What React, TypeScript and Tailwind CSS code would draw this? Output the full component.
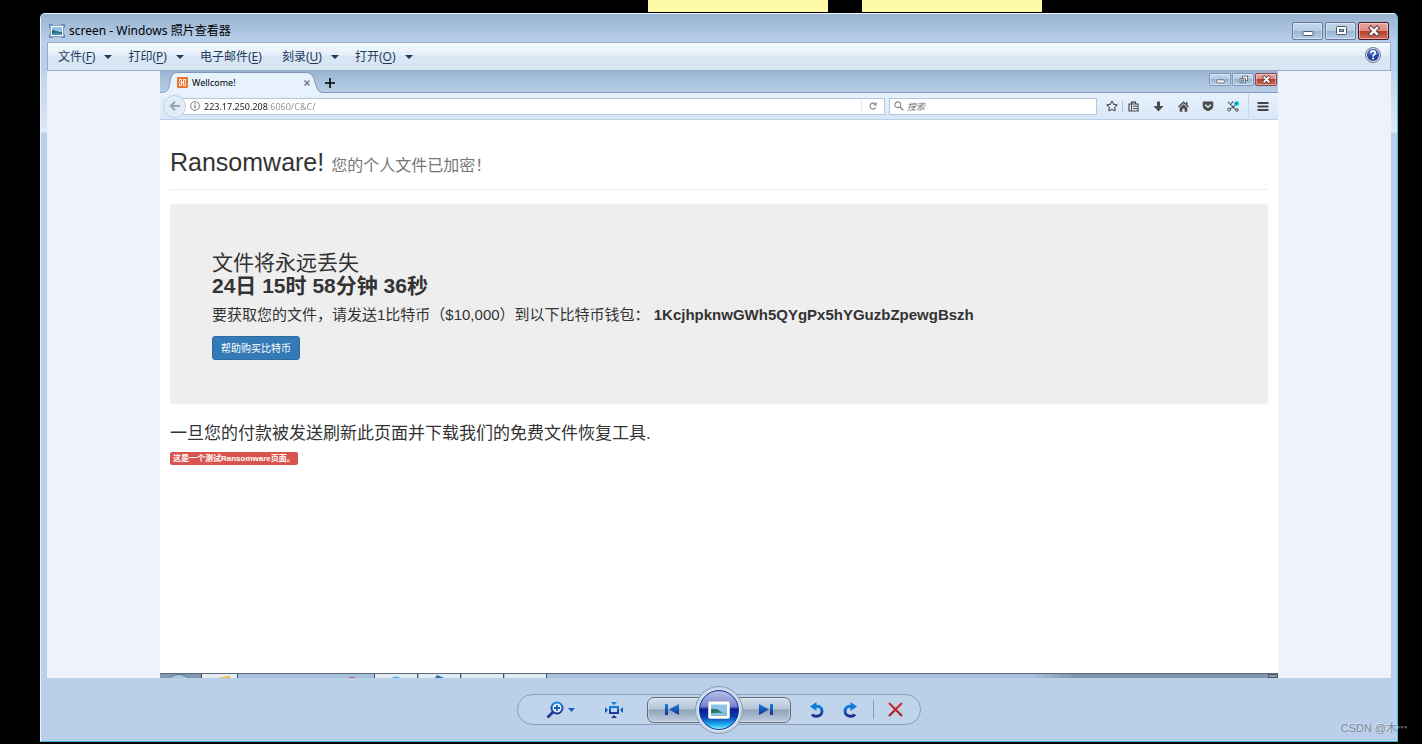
import React from "react";
import { FaGetPocket, FaRegStar } from "react-icons/fa";

const menuItems = [
  { label: "文件", hotkey: "F", arrow: true },
  { label: "打印", hotkey: "P", arrow: true },
  { label: "电子邮件", hotkey: "E", arrow: false },
  { label: "刻录", hotkey: "U", arrow: true },
  { label: "打开", hotkey: "O", arrow: true },
];

function PhotoIcon({ className }: { className?: string }) {
  return (
    <svg viewBox="0 0 16 14" className={className} aria-hidden="true">
      <path d="M.5 3.5v-3h3M12.500.5h3v3M15.500 10.500v3h-3M3.500 13.500h-3v-3" fill="none" stroke="#3f87bd" />
      <rect x="1.500" y="1.500" width="13" height="11" rx="1" fill="#fff" stroke="#6f8090" strokeWidth=".7" />
      <rect x="3" y="3" width="10" height="8" fill="#8fc3ea" />
      <path d="M3 6c3 0 5 2 10 2v3H3z" fill="#2c6b68" />
      <path d="M3 9.500c4-1 6-1 10 .3V11H3z" fill="#3b8fc4" />
    </svg>
  );
}

function CaptionIcon({ kind, small }: { kind: string; small?: boolean }) {
  return (
    <svg viewBox="0 0 14 12" className={small ? "h-[9px] w-[11px]" : "h-3 w-[14px]"} aria-hidden="true">
      {kind === "min" && <rect x="2" y="6.500" width="10" height="4" rx=".8" fill="#fff" stroke="#515a68" />}
      {kind === "max" && (
        <g stroke="#515a68">
          <rect x="2.500" y="1.500" width="10" height="8" rx=".8" fill="#fff" />
          <rect x="5.500" y="4.500" width="4" height="2" fill="#9cb6d2" />
        </g>
      )}
      {kind === "restore" && (
        <g stroke="#515a68">
          <rect x="5.500" y="1.500" width="7" height="6" fill="#fff" />
          <rect x="2.500" y="4.500" width="7" height="6" fill="#fff" />
          <rect x="4.500" y="6.500" width="3" height="2" fill="#9cb6d2" />
        </g>
      )}
      {kind === "close" && (
        <g strokeLinecap="square">
          <path d="M4 3l6 6M10 3L4 9" stroke="#5b3a41" strokeWidth="4.400" />
          <path d="M4 3l6 6M10 3L4 9" stroke="#fff" strokeWidth="2.400" />
        </g>
      )}
    </svg>
  );
}

function CaptionButton({ kind, label, small }: { kind: string; label: string; small?: boolean }) {
  const size = small ? "h-[13px] w-[22px]" : "h-[18px] w-[31px]";
  const border = kind === "close" ? (small ? "border-[#83495a]" : "border-[#4c1723]") : small ? "border-[#8196b5]" : "border-[#66799a]";
  const fill =
    kind === "close"
      ? "bg-[linear-gradient(#e5a69d_0%,#dc8d82_48%,#bb3a25_50%,#d0705c_100%)]"
      : "bg-[linear-gradient(#c3d6ea_0%,#b4cbe3_48%,#97b2cf_50%,#b7cfe8_100%)]";
  return (
    <button
      aria-label={label}
      className={`${size} ${border} ${fill} flex items-center justify-center rounded-[2px] border shadow-[inset_0_0_0_1px_rgba(255,255,255,0.4)]`}
    >
      <CaptionIcon kind={kind} small={small} />
    </button>
  );
}

function TitleBar() {
  return (
    <header className="flex h-7 items-start justify-between pl-[2px] pr-[2px] pt-2">
      <div className="flex h-[18px] items-center gap-1">
        <PhotoIcon className="h-[14px] w-4" />
        <h1 className="text-xs text-black">screen - Windows 照片查看器</h1>
      </div>
      <div className="flex gap-[2px]">
        <CaptionButton kind="min" label="最小化" />
        <CaptionButton kind="max" label="最大化" />
        <CaptionButton kind="close" label="关闭" />
      </div>
    </header>
  );
}

function MenuBar() {
  return (
    <nav className="flex h-[29px] items-center justify-between border border-[#9aabc8] bg-[linear-gradient(#f6fafe_0%,#e3eef8_45%,#d8e5f3_50%,#d9e6f4_100%)] pl-[10px] pr-[9px]">
      <div className="flex items-center text-xs text-[#1e395b]">
        {menuItems.map((item) => (
          <button key={item.hotkey} className={item.arrow ? "mr-4 flex items-center gap-[9px]" : "mr-5"}>
            <span>
              {item.label}(<u className="underline-offset-2">{item.hotkey}</u>)
            </span>
            {item.arrow && (
              <svg viewBox="0 0 8 4" className="h-1 w-2" aria-hidden="true">
                <path d="M0 0h8L4 4z" fill="#1e395b" />
              </svg>
            )}
          </button>
        ))}
      </div>
      <button aria-label="帮助" className="mb-[3px]">
        <svg viewBox="0 0 16 16" className="size-4" aria-hidden="true">
          <circle cx="8" cy="8" r="7.500" fill="#e6e9ee" stroke="#75797f" />
          <circle cx="8" cy="8" r="6" fill="#2446a8" />
          <path d="M2.500 7a5.500 5 0 0 1 11 0c-3 2-8 2-11 0z" fill="#4668c4" />
          <path d="M5.800 6.200C5.800 3.200 10.300 3.300 10.300 6c0 1.700-2.200 1.700-2.200 3.500" fill="none" stroke="#fff" strokeWidth="1.700" />
          <rect x="7.200" y="10.500" width="1.800" height="1.800" fill="#fff" />
        </svg>
      </button>
    </nav>
  );
}

function TabStrip() {
  return (
    <div className="flex h-[22px] items-start justify-between border-b border-[#8299bd] bg-[linear-gradient(#9ab4d2,#b7cfe8)] pr-px">
      <div className="flex h-[22px] items-end">
        <div className="relative flex h-[22px] w-[164px] items-center pl-[17px] pr-2 pt-px">
          <svg viewBox="0 0 164 22" className="absolute inset-0 h-full w-full" aria-hidden="true">
            <path
              d="M0 21.500C8 21.500 9 18 10 11C11 3 14 1.500 19 1.500H145C151 1.500 153 4 155 11C157 18 158 21.500 164 21.500V22H0z"
              fill="#e7f2fd"
            />
            <path
              d="M0 21.500C8 21.500 9 18 10 11C11 3 14 1.500 19 1.500H145C151 1.500 153 4 155 11C157 18 158 21.500 164 21.500"
              fill="none"
              stroke="#7f96ba"
            />
          </svg>
          <svg viewBox="0 0 11 11" className="relative size-[11px]" aria-hidden="true">
            <rect width="11" height="11" rx="1" fill="#ea7430" />
            <path d="M4.500 2.500h-2v2l.7 1-.7 1v2h2v-3h2v3h2v-2l-.7-1 .7-1v-2h-2v3h-2z" fill="none" stroke="#fff" strokeWidth=".9" strokeLinejoin="round" />
          </svg>
          <span className="relative ml-1 flex-1 text-[9px] text-black">Wellcome!</span>
          <button aria-label="关闭标签页" className="relative mr-[6px]">
            <svg viewBox="0 0 6 6" className="size-[6px]" aria-hidden="true">
              <path d="M.5.5l5 5M5.500.5l-5 5" stroke="#747e8b" strokeWidth="1.500" />
            </svg>
          </button>
        </div>
        <button aria-label="新建标签页" className="flex h-[22px] w-3 items-center justify-center pt-[2px]">
          <svg viewBox="0 0 10 10" className="size-[10px]" aria-hidden="true">
            <path d="M5 0v10M0 5h10" stroke="#000" strokeWidth="1.600" />
          </svg>
        </button>
      </div>
      <div className="flex gap-px pt-[2px]">
        <CaptionButton small kind="min" label="最小化窗口" />
        <CaptionButton small kind="restore" label="还原窗口" />
        <CaptionButton small kind="close" label="关闭窗口" />
      </div>
    </div>
  );
}

function NavBar() {
  return (
    <div className="flex h-[27px] items-center border-b border-[#bdd0e6] bg-[linear-gradient(#e7f2fd,#d8e7f7)] pl-[3px] pr-[9px] text-[#4a4a4a]">
      <button
        aria-label="后退"
        className="z-10 -mr-1 flex size-[23px] shrink-0 items-center justify-center rounded-full border border-[#c0cfdf] bg-[#e2edf8]"
      >
        <svg viewBox="0 0 12 10" className="h-[10px] w-3" aria-hidden="true">
          <path d="M6 .8L1.800 5L6 9.200M2 5h9" fill="none" stroke="#9ba5af" strokeWidth="2.200" />
        </svg>
      </button>
      <div className="flex h-[17px] flex-1 items-center border border-[#b4c7de] bg-white pl-[7px]">
        <svg viewBox="0 0 10 10" className="size-[10px] shrink-0" aria-hidden="true">
          <circle cx="5" cy="5" r="4.400" fill="none" stroke="#717171" strokeWidth=".9" />
          <path d="M5 4.300v3.200M5 2.300v1.200" stroke="#717171" strokeWidth="1.200" />
        </svg>
        <input
          aria-label="地址"
          defaultValue="223.17.250.208:6060/C&C/"
          className="ml-1 h-[15px] min-w-0 flex-1 bg-[linear-gradient(90deg,#1c1c1c_64px,#8f8f8f_64px)] bg-clip-text text-[9px] text-transparent outline-none"
        />
        <button aria-label="刷新" className="flex h-[13px] w-[23px] items-center justify-center border-l border-[#e2e8ef]">
          <svg viewBox="0 0 8 8" className="size-2" aria-hidden="true">
            <path d="M6.700 5.500A3 3 0 1 1 6.200 2" fill="none" stroke="#7d8b99" strokeWidth="1.200" />
            <path d="M7.600 0v3.600H4z" fill="#7d8b99" />
          </svg>
        </button>
      </div>
      <div className="ml-1 flex h-[17px] w-[208px] items-center border border-[#b4c7de] bg-white pl-1">
        <svg viewBox="0 0 10 10" className="size-[10px]" aria-hidden="true">
          <circle cx="3.800" cy="3.800" r="2.900" fill="none" stroke="#8a8a8a" strokeWidth="1.200" />
          <path d="M6 6l3.300 3.300" stroke="#8a8a8a" strokeWidth="1.500" />
        </svg>
        <input
          aria-label="搜索"
          placeholder="搜索"
          className="ml-[3px] h-[15px] min-w-0 flex-1 text-[9px] italic outline-none placeholder:text-[#707070]"
        />
      </div>
      <div className="ml-[9px] flex items-center">
        <button aria-label="收藏">
          <FaRegStar className="size-3" />
        </button>
        <span className="ml-1 h-3 w-px bg-[#b9c6d6]" />
        <button aria-label="书签" className="ml-[5px]">
          <svg viewBox="0 0 11 11" className="size-[11px]" aria-hidden="true">
            <path d="M1 3h9v7H1zM3.500 3V1.200h4V3" fill="none" stroke="#4a4a4a" strokeWidth="1.200" />
            <path d="M3.500 3v7M5 5.200h4M5 7.500h4" stroke="#4a4a4a" />
          </svg>
        </button>
        <button aria-label="下载" className="ml-[14px]">
          <svg viewBox="0 0 11 11" className="size-[11px]" aria-hidden="true">
            <path d="M4 .5h3V5h3.500l-5 5.500L.5 5H4z" fill="#4a4a4a" />
          </svg>
        </button>
        <button aria-label="主页" className="ml-[14px]">
          <svg viewBox="0 0 11 11" className="size-[11px]" aria-hidden="true">
            <path d="M5.500.3L11 5.600l-.9.900-4.600-4.300L.9 6.500 0 5.600z" fill="#4a4a4a" />
            <path d="M5.500 3.200L9.300 6.700v4H6.600V7.500H4.400v3.200H1.700v-4z" fill="#4a4a4a" />
            <path d="M8 1h1.500v3L8 2.600z" fill="#4a4a4a" />
          </svg>
        </button>
        <button aria-label="Pocket" className="ml-[13px]">
          <FaGetPocket className="size-3" />
        </button>
        <button aria-label="截图" className="ml-[13px]">
          <svg viewBox="0 0 13 11" className="h-[11px] w-[13px]" aria-hidden="true">
            <path d="M1 1l8 8M10 3L3 8.500M6 .5L4 3" stroke="#555" strokeWidth="1.300" strokeDasharray="2 .5" />
            <circle cx="2" cy="8.500" r="1.500" fill="none" stroke="#555" />
            <circle cx="10" cy="9" r="1.300" fill="none" stroke="#555" />
            <circle cx="9.500" cy="2.500" r="2.500" fill="#12d8e4" />
            <circle cx="9.500" cy="2.500" r="1" fill="#134e58" />
          </svg>
        </button>
        <span className="ml-2 h-6 w-px bg-[#c6d6e7]" />
        <button aria-label="菜单" className="ml-2">
          <svg viewBox="0 0 12 9" className="h-[9px] w-3" aria-hidden="true">
            <path d="M.5 1h11M.5 4.500h11M.5 8h11" stroke="#454545" strokeWidth="2" />
          </svg>
        </button>
      </div>
    </div>
  );
}

function PageContent() {
  return (
    <main className="flex-1 bg-white px-[10px] pt-[26px] font-['Liberation_Sans','Noto_Sans_CJK_SC',sans-serif] text-[#333]">
      <h2 className="border-b border-[#eee] pb-[10px] text-[25px] leading-[33px]">
        Ransomware! <small className="text-base leading-none text-[#777]">您的个人文件已加密！</small>
      </h2>
      <section className="mt-[14px] rounded-[4px] bg-[#eee] px-[42px] pb-11 pt-[47px]">
        <h3 className="text-[21px] leading-[23px]">文件将永远丢失</h3>
        <p className="text-[21px] font-bold leading-[23px]">24日 15时 58分钟 36秒</p>
        <p className="mt-2 text-[15px] leading-5">
          要获取您的文件，请发送1比特币（$10,000）到以下比特币钱包： <b>1KcjhpknwGWh5QYgPx5hYGuzbZpewgBszh</b>
        </p>
        <button className="mt-[11px] flex h-6 items-center rounded-[3px] border border-[#2e6da4] bg-[#337ab7] px-2 text-[10px] text-white">
          帮助购买比特币
        </button>
      </section>
      <h4 className="mt-5 text-[17px] leading-5">一旦您的付款被发送刷新此页面并下载我们的免费文件恢复工具.</h4>
      <p className="mt-2 flex">
        <span className="rounded-[2px] bg-[#d9534f] px-[3px] text-[8px] font-bold leading-[13px] text-white">
          这是一个测试Ransomware页面。
        </span>
      </p>
    </main>
  );
}

// Only the top edge of the taskbar is inside the photo
function TaskbarEdge() {
  return (
    <div className="flex h-[5px] overflow-hidden border-t border-[#5f6b7a] bg-[linear-gradient(90deg,#8398b2_0,#8398b2_40px,#a7c0dc_80px,#a7c0dc_78%,#7f94ad_82%)]">
      <svg viewBox="0 0 400 4" className="h-1 w-[400px]" aria-hidden="true">
        <ellipse cx="19" cy="6" rx="9" ry="5.500" fill="#a9cadb" stroke="#4e7a9b" />
        <path d="M42 0h35v4H42zM215 0h42v4h-42zM259 0h41v4h-41zM302 0h41v4h-41zM345 0h41v4h-41z" fill="#e3ebf3" />
        <path d="M41.500 0v4M77.500 0v4M214.500 0v4M257.500 0v4M300.500 0v4M343.500 0v4M386.500 0v4" stroke="#3f5165" />
        <path d="M57 4l6-1 7-1v2z" fill="#eebd24" />
        <path d="M188 4q4-2 8 0z" fill="#d84a3c" />
        <path d="M231 4q5-3 10 0z" fill="#43b4e4" />
        <path d="M275 4l2-3 7 3z" fill="#2b6cab" />
      </svg>
      <span className="ml-auto w-[10px] border border-[#4c5865] bg-[#8d99a5]" />
    </div>
  );
}

function Controls() {
  const segment =
    "flex h-[26px] w-[56px] items-center border border-[#5e6b7c] bg-[linear-gradient(#d5e1ec_0%,#b5c5d5_45%,#90a4b9_50%,#bccddd_100%)] shadow-[inset_0_0_0_1px_rgba(255,255,255,0.35)]";
  return (
    <footer className="flex h-[63px] items-center justify-center">
      <svg width="0" height="0" className="absolute" aria-hidden="true">
        <defs>
          <linearGradient id="ink" x1="0" y1="0" x2="0" y2="1">
            <stop offset="0" stopColor="#1484e6" />
            <stop offset="1" stopColor="#1c2c8c" />
          </linearGradient>
          <linearGradient id="red" x1="0" y1="0" x2="0" y2="1">
            <stop offset="0" stopColor="#e0262a" />
            <stop offset="1" stopColor="#a92026" />
          </linearGradient>
        </defs>
      </svg>
      <div className="flex h-[31px] items-center rounded-full border border-[#8c9db3] bg-[#c0d5eb]">
        <div className="flex w-[129px] items-center pl-7">
          <button aria-label="更改显示大小" className="flex items-center gap-1">
            <svg viewBox="0 0 18 18" className="size-[18px]" aria-hidden="true">
              <circle cx="11" cy="7" r="5.500" fill="#e2effb" stroke="url(#ink)" strokeWidth="2" />
              <path d="M11 4v6M8 7h6" stroke="#1660c4" strokeWidth="1.800" />
              <path d="M7 11l-5.500 5.500" stroke="#1d3a9a" strokeWidth="2.800" />
            </svg>
            <svg viewBox="0 0 7 4" className="h-1 w-[7px]" aria-hidden="true">
              <path d="M0 0h7L3.500 4z" fill="#1660c4" />
            </svg>
          </button>
          <button aria-label="实际大小" className="ml-[30px]">
            <svg viewBox="0 0 18 16" className="h-4 w-[18px]" aria-hidden="true">
              <path fillRule="evenodd" d="M4 4h10v8H4zM6 6v4h6V6z" fill="url(#ink)" />
              <path d="M6 0h6L9 3zM0 5l3 3-3 3zM18 5l-3 3 3 3zM6 16h6l-3-3z" fill="url(#ink)" />
            </svg>
          </button>
        </div>
        <button aria-label="上一个" className={`${segment} rounded-l-[7px] pl-4`}>
          <svg viewBox="0 0 15 11" className="h-[11px] w-[15px]" aria-hidden="true">
            <path d="M1 0h3v11H1zM15 0v11L5 5.500z" fill="url(#ink)" />
          </svg>
        </button>
        <button
          aria-label="放映幻灯片"
          className="z-10 -mx-2 flex size-12 items-center justify-center rounded-full border border-[#8c9db3] bg-[#c5d8ec]"
        >
          <span className="flex size-[40px] items-center justify-center rounded-full border border-[#17308a] bg-[linear-gradient(#b9bee6_0%,#7886cf_40%,#0c1c91_48%,#063fb4_68%,#22b8f4_90%,#8ff0ff_100%)] shadow-[0_0_0_1px_#e3eefa]">
            <svg viewBox="0 0 22 18" className="h-[18px] w-[22px]" aria-hidden="true">
              <rect x=".5" y=".5" width="21" height="17" rx="1.500" fill="#fff" stroke="#c7cdd6" />
              <rect x="3" y="3.500" width="16" height="11" fill="#8ec4ea" />
              <path d="M3 8q6-1 9 2t7 2.500v2H3z" fill="#2f7568" />
              <path d="M3 12.500q8-1.500 16 .5v1.500H3z" fill="#8ac9e0" />
            </svg>
          </span>
        </button>
        <button aria-label="下一个" className={`${segment} justify-end rounded-r-[7px] pr-4`}>
          <svg viewBox="0 0 15 11" className="h-[11px] w-[15px]" aria-hidden="true">
            <path d="M0 0v11l10-5.500zM11 0h3v11h-3z" fill="url(#ink)" />
          </svg>
        </button>
        <div className="flex w-[129px] items-center justify-end pr-[17px]">
          <button aria-label="逆时针旋转">
            <svg viewBox="0 0 14 16" className="h-4 w-[14px]" aria-hidden="true">
              <path d="M5 4.500C9.500 3.500 12 6 12 9c0 3.300-2.700 5.300-5.500 5.300-2 0-3.500-.7-4.500-2" fill="none" stroke="url(#ink)" strokeWidth="3" />
              <path d="M0 4.500L6.500 0v9z" fill="#1478dc" />
            </svg>
          </button>
          <button aria-label="顺时针旋转" className="ml-[19px]">
            <svg viewBox="0 0 14 16" className="h-4 w-[14px]" aria-hidden="true">
              <path d="M9 4.500C4.500 3.500 2 6 2 9c0 3.300 2.700 5.300 5.500 5.300 2 0 3.500-.7 4.500-2" fill="none" stroke="url(#ink)" strokeWidth="3" />
              <path d="M14 4.500L7.500 0v9z" fill="#1478dc" />
            </svg>
          </button>
          <span className="ml-4 h-[19px] w-px bg-[#8c9db3]" />
          <button aria-label="删除" className="ml-[14px]">
            <svg viewBox="0 0 15 15" className="size-[15px]" aria-hidden="true">
              <path d="M1 1l13 13M14 1L1 14" stroke="url(#red)" strokeWidth="2.200" />
            </svg>
          </button>
        </div>
      </div>
    </footer>
  );
}

export default function App() {
  return (
    <div className="relative flex min-h-screen flex-col bg-black pb-[2px] pl-10 pr-6 font-['Noto_Sans','Noto_Sans_CJK_SC',sans-serif]">
      {/* Sticky notes peeking in from above */}
      <div className="mb-px flex h-3 gap-[34px] pl-[608px]">
        <span className="w-[180px] bg-[#fdf9a7]" />
        <span className="w-[180px] bg-[#fdf9a7]" />
      </div>

      <div className="flex flex-1 flex-col rounded-t-[5px] border border-b-[#3fb6d6] border-l-[#e9f2fa] border-r-[#4fc4e0] border-t-[#eef5fb] bg-[linear-gradient(#98b2d0_0px,#b9d0ea_28px,#b9d0ea_50px,#dfe9f5_118px,#bad0ea_119px)] px-[6px]">
        <TitleBar />
        <MenuBar />
        <div className="flex flex-1 flex-col bg-[#edf2fb] px-[113px]">
          <TabStrip />
          <NavBar />
          <PageContent />
          <TaskbarEdge />
        </div>
        <Controls />
      </div>

      <span className="absolute bottom-2 right-[14px] font-['Liberation_Sans','Noto_Sans_CJK_SC',sans-serif] text-[11px] leading-4 text-[#7c8998] [text-shadow:-1px_-1px_0_rgba(235,240,246,0.6)]">
        CSDN @木⋯
      </span>
    </div>
  );
}
